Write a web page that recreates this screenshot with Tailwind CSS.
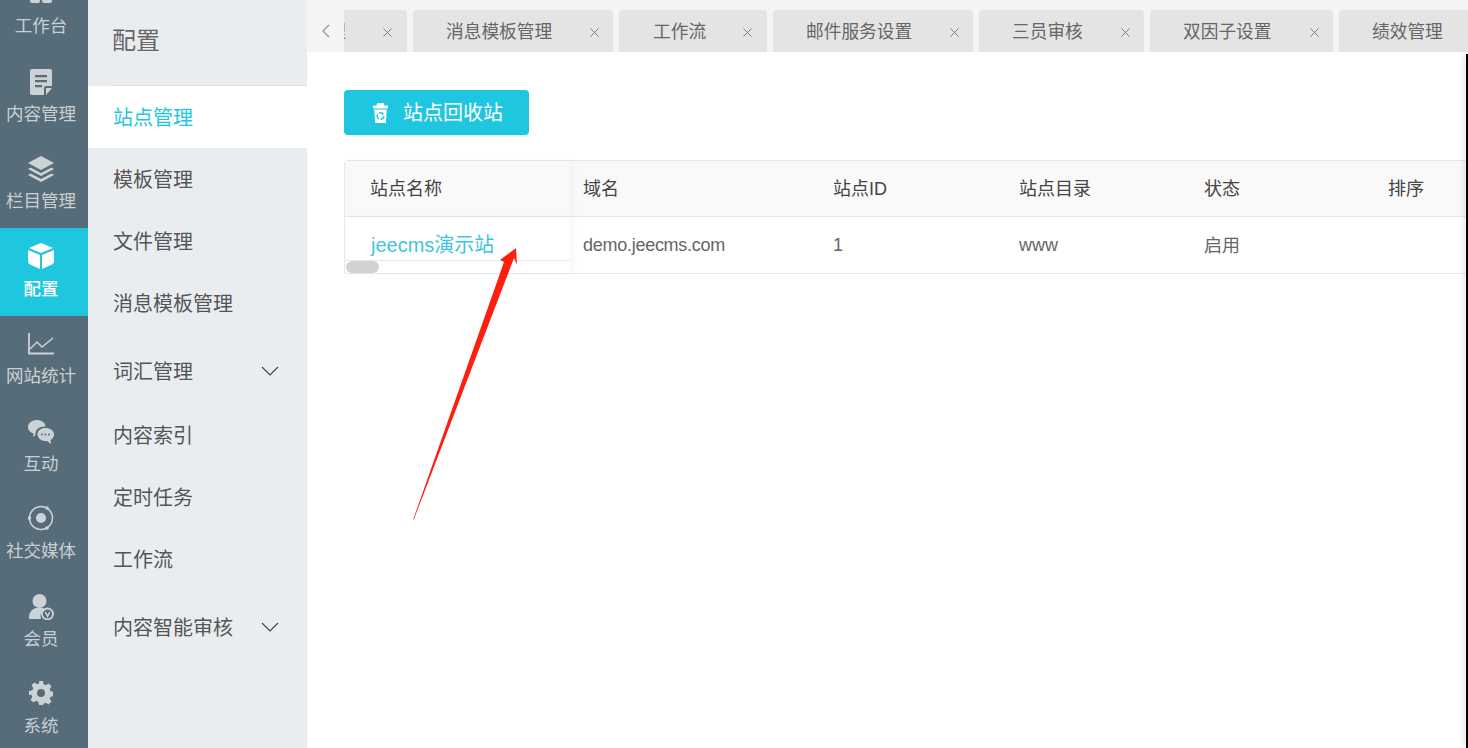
<!DOCTYPE html>
<html lang="zh-CN">
<head>
    <meta charset="UTF-8">
    <meta name="viewport" content="width=device-width, initial-scale=1.0">
    <title>配置</title>
    <script src="https://cdn.jsdelivr.net/npm/@tailwindcss/browser@4"></script>
</head>
<body class="h-[748px] w-[1468px] overflow-hidden bg-white font-['Liberation_Sans','Noto_Sans_CJK_SC',sans-serif]">
<div class="relative flex h-[748px] w-[1468px] overflow-hidden">

    <!-- icon rail -->
    <nav class="h-full w-[88px] shrink-0 overflow-hidden bg-[#566c78] text-[#c9d0d4]">
        <div class="-mt-[36px]">
            <a class="flex h-[88px] flex-col items-center justify-end pr-[6px] pb-[14px] text-[17.5px] leading-[24px]">
                <svg class="mb-[10px] h-[24px] w-[24px]" viewBox="0 0 24 24" fill="#ccd3d7"><rect x="1" y="1" width="10" height="10" rx="2"/><rect x="13" y="1" width="10" height="10" rx="2"/><rect x="1" y="13" width="10" height="10" rx="2"/><rect x="13" y="13" width="10" height="10" rx="2"/></svg>
                工作台
            </a>
            <a class="flex h-[88px] flex-col items-center justify-end pr-[6px] pb-[14px] text-[17.5px] leading-[24px]">
                <svg class="mb-[7px] h-[26px] w-[24px]" viewBox="0 0 24 26" fill="#ccd3d7"><path d="M3 0h18a2 2 0 0 1 2 2v15h-6a2 2 0 0 0-2 2v7H3a2 2 0 0 1-2-2V2a2 2 0 0 1 2-2z"/><path d="M17 19h6l-6 7z"/><path d="M6 6h12v2.200H6zM6 11h12v2.200H6zM6 16h7v2.200H6z" fill="#566c78"/></svg>
                内容管理
            </a>
            <a class="flex h-[88px] flex-col items-center justify-end pr-[6px] pb-[15px] text-[17.5px] leading-[24px]">
                <svg class="mb-[7px] h-[26px] w-[26px]" viewBox="0 0 26 26" fill="#ccd3d7"><path d="M13 0l13 7-13 7L0 7z"/><path d="M2.500 11.500L13 17l10.500-5.500L26 13 13 20 0 13z"/><path d="M2.500 17.500L13 23l10.500-5.500L26 19 13 26 0 19z"/></svg>
                栏目管理
            </a>
            <a class="flex h-[88px] flex-col items-center justify-end bg-[#1fc6e0] pr-[6px] pb-[15px] text-[17.5px] leading-[24px] font-medium text-white">
                <svg class="mb-[8px] h-[26px] w-[26px]" viewBox="0 0 26 26" fill="#fff"><path d="M13 0l12 5-12 5L1 5z"/><path d="M0 7l12 5v14L2 21.500Q0 20.500 0 18.500z"/><path d="M26 7l-12 5v14l10-4.500q2-1 2-3z"/></svg>
                配置
            </a>
            <a class="flex h-[88px] flex-col items-center justify-end pr-[6px] pb-[16px] text-[17.5px] leading-[24px]">
                <svg class="mb-[9px] h-[22px] w-[26px]" viewBox="0 0 26 22" fill="none" stroke="#ccd3d7"><path d="M1 0v20.500h25" stroke-width="1.800"/><path d="M2 16l7-7 5 5 11-9" stroke-width="1.500"/></svg>
                网站统计
            </a>
            <a class="flex h-[88px] flex-col items-center justify-end pr-[6px] pb-[16px] text-[17.5px] leading-[24px]">
                <svg class="mb-[8px] h-[24px] w-[26px]" viewBox="0 0 26 24" fill="#ccd3d7"><path d="M9 0c5 0 8.500 3 8.500 6.500C12 6 7 9 7.500 15L5 17l.5-3.500C2 12.500 0 10 0 7c0-4 4-7 9-7z"/><path d="M17.500 8c4.500 0 8.500 2.500 8.500 6.500 0 2.500-1.500 4.500-3.500 5.500l.5 4-4-3c-5 .5-9.500-2.500-9.500-6.500S13 8 17.500 8z"/><circle cx="14" cy="14.500" r="1" fill="#566c78"/><circle cx="17.500" cy="14.500" r="1" fill="#566c78"/><circle cx="21" cy="14.500" r="1" fill="#566c78"/></svg>
                互动
            </a>
            <a class="flex h-[88px] flex-col items-center justify-end pr-[6px] pb-[17px] text-[17.5px] leading-[24px]">
                <svg class="mb-[8px] h-[26px] w-[26px]" viewBox="0 0 26 26" fill="none" stroke="#ccd3d7"><circle cx="13" cy="13" r="11.500" stroke-width="1.500"/><circle cx="13" cy="13" r="5" fill="#ccd3d7" stroke="none"/><circle cx="19" cy="3" r="1.800" fill="#ccd3d7" stroke="none"/><circle cx="1.500" cy="13" r="1.800" fill="#ccd3d7" stroke="none"/><circle cx="19" cy="23" r="1.800" fill="#ccd3d7" stroke="none"/></svg>
                社交媒体
            </a>
            <a class="flex h-[88px] flex-col items-center justify-end pr-[6px] pb-[17px] text-[17.5px] leading-[24px]">
                <svg class="mb-[7px] h-[26px] w-[26px]" viewBox="0 0 26 26" fill="#ccd3d7"><circle cx="11.500" cy="7" r="7"/><path d="M1 24c0-6 3-9 7-10h7c1 .5 2 1 3 2-4 .5-6.500 4-5 8.500l-1 .5H2q-1 0-1-1z"/><circle cx="19.500" cy="20" r="5.500" fill="none" stroke="#ccd3d7" stroke-width="1.800"/><path d="M17.300 18l2.200 4.300 2.200-4.300" fill="none" stroke="#ccd3d7" stroke-width="1.500"/></svg>
                会员
            </a>
            <a class="flex h-[88px] flex-col items-center justify-end pr-[6px] pb-[18px] text-[17.5px] leading-[24px]">
                <svg class="mb-[9px] h-[24px] w-[24px]" viewBox="0 0 24 24" fill="#ccd3d7"><path fill-rule="evenodd" d="M10 0h4l.7 3.300 2.100.9 2.800-1.800 2.900 2.900-1.800 2.800.9 2.100 3.400.8v4l-3.400.7-.9 2.100 1.800 2.800-2.900 2.900-2.800-1.800-2.100.9L14 24h-4l-.7-3.300-2.100-.9-2.800 1.800-2.900-2.900 1.800-2.800-.9-2.100L0 14v-4l3.400-.8.900-2.100-1.800-2.800 2.900-2.900 2.800 1.800 2.100-.9zM12 8a4 4 0 1 0 0 8 4 4 0 0 0 0-8z"/></svg>
                系统
            </a>
        </div>
    </nav>

    <!-- second level menu -->
    <aside class="h-full w-[219px] shrink-0 bg-[#eaedf0] text-[20px] text-[#555]">
        <div class="ml-[24px] flex h-[86px] items-center border-b border-[#e1e3e6] pb-[4px] text-[24px] text-[#666]">配置</div>
        <a class="flex h-[62px] items-center bg-white pt-[2px] pl-[25px] text-[#1fc6e0]">站点管理</a>
        <a class="flex h-[62px] items-center pt-[2px] pl-[25px]">模板管理</a>
        <a class="flex h-[62px] items-center pt-[2px] pl-[25px]">文件管理</a>
        <a class="flex h-[62px] items-center pt-[2px] pl-[25px]">消息模板管理</a>
        <a class="flex h-[70px] items-center justify-between pt-[4px] pr-[28px] pl-[25px]"><span class="pt-[2px]">词汇管理</span>
            <svg class="h-[10px] w-[18px]" viewBox="0 0 18 10" fill="none" stroke="#444" stroke-width="1.200"><path d="M1 1l8 8 8-8"/></svg>
        </a>
        <a class="flex h-[62px] items-center pt-[2px] pl-[25px]">内容索引</a>
        <a class="flex h-[62px] items-center pt-[2px] pl-[25px]">定时任务</a>
        <a class="flex h-[62px] items-center pt-[2px] pl-[25px]">工作流</a>
        <a class="flex h-[74px] items-center justify-between pr-[28px] pl-[25px]"><span class="pt-[2px]">内容智能审核</span>
            <svg class="h-[10px] w-[18px]" viewBox="0 0 18 10" fill="none" stroke="#444" stroke-width="1.200"><path d="M1 1l8 8 8-8"/></svg>
        </a>
    </aside>

    <main class="min-w-0 flex-1">
        <!-- tab strip -->
        <div class="flex h-[52px] items-end overflow-hidden bg-[#f4f4f4] text-[17.7px] text-[#666]">
            <div class="flex h-[42px] w-[37px] shrink-0 items-center pb-[1px] pl-[15px]">
                <svg class="h-[14px] w-[8px]" viewBox="0 0 8 14" fill="none" stroke="#8c98a4" stroke-width="1.200"><path d="M7 1L1 7l6 6"/></svg>
            </div>
            <div class="flex h-[42px] w-[63px] shrink-0 items-center justify-between overflow-hidden rounded-tr-[4px] bg-[#e4e4e4] pt-[2px] pr-[15px]">
                <span class="-ml-[16px]">理</span>
                <svg class="h-[9px] w-[9px]" viewBox="0 0 10 10" stroke="#777"><path d="M.5.5l9 9M9.500.5l-9 9"/></svg>
            </div>
            <div class="ml-[6px] flex h-[42px] w-[200px] shrink-0 items-center rounded-t-[4px] bg-[#e4e4e4] pt-[2px] pr-[14px] pl-[33px]"><span class="flex-1">消息模板管理</span><svg class="h-[9px] w-[9px]" viewBox="0 0 10 10" stroke="#777"><path d="M.5.5l9 9M9.500.5l-9 9"/></svg></div>
            <div class="ml-[6px] flex h-[42px] w-[148px] shrink-0 items-center rounded-t-[4px] bg-[#e4e4e4] pt-[2px] pr-[15px] pl-[34px]"><span class="flex-1">工作流</span><svg class="h-[9px] w-[9px]" viewBox="0 0 10 10" stroke="#777"><path d="M.5.5l9 9M9.500.5l-9 9"/></svg></div>
            <div class="ml-[6px] flex h-[42px] w-[200px] shrink-0 items-center rounded-t-[4px] bg-[#e4e4e4] pt-[2px] pr-[14px] pl-[33px]"><span class="flex-1">邮件服务设置</span><svg class="h-[9px] w-[9px]" viewBox="0 0 10 10" stroke="#777"><path d="M.5.5l9 9M9.500.5l-9 9"/></svg></div>
            <div class="ml-[6px] flex h-[42px] w-[165px] shrink-0 items-center rounded-t-[4px] bg-[#e4e4e4] pt-[2px] pr-[14px] pl-[33px]"><span class="flex-1">三员审核</span><svg class="h-[9px] w-[9px]" viewBox="0 0 10 10" stroke="#777"><path d="M.5.5l9 9M9.500.5l-9 9"/></svg></div>
            <div class="ml-[6px] flex h-[42px] w-[183px] shrink-0 items-center rounded-t-[4px] bg-[#e4e4e4] pt-[2px] pr-[14px] pl-[33px]"><span class="flex-1">双因子设置</span><svg class="h-[9px] w-[9px]" viewBox="0 0 10 10" stroke="#777"><path d="M.5.5l9 9M9.500.5l-9 9"/></svg></div>
            <div class="ml-[6px] flex h-[42px] w-[165px] shrink-0 items-center rounded-t-[4px] bg-[#e4e4e4] pt-[2px] pl-[33px]">绩效管理</div>
        </div>

        <div class="pt-[38px] pl-[37px]">
            <button class="flex h-[45px] w-[185px] items-center rounded-[4px] bg-[#1fc6e0] pl-[29px] text-[20px] text-white">
                <svg class="mr-[15px] h-[20px] w-[15px]" viewBox="0 0 15 20"><path d="M4.500 0h6l1 2.500H15v3H0v-3h3.500z" fill="#fff"/><path d="M1.200 6.500h12.600L12.800 20H2.200z" fill="#fff"/><circle cx="7.500" cy="13" r="3.300" fill="none" stroke="#1fc6e0" stroke-width="1.500" stroke-dasharray="5 1.900"/></svg>
                站点回收站
            </button>

            <!-- sites table, runs past the right edge -->
            <div class="relative mt-[25px] h-[114px] w-[1200px] rounded-l-[4px] border border-r-0 border-[#e8e8ec] text-[18px]">
                <div class="flex h-[56px] border-b border-[#e8e8ec] bg-[#f9f9f9] text-[#444]">
                    <div class="flex w-[225px] items-center pt-[2px] pl-[25px] shadow-[4px_0_5px_rgba(0,0,0,0.03)]">站点名称</div>
                    <div class="flex w-[252px] items-center pt-[2px] pl-[13px]">域名</div>
                    <div class="flex w-[186px] items-center pt-[2px] pl-[11px]">站点ID</div>
                    <div class="flex w-[185px] items-center pt-[2px] pl-[11px]">站点目录</div>
                    <div class="flex w-[185px] items-center pt-[2px] pl-[11px]">状态</div>
                    <div class="flex w-[100px] items-center pt-[2px] pl-[10px]">排序</div>
                </div>
                <div class="flex h-[56px] text-[#666]">
                    <div class="w-[225px] shadow-[4px_0_5px_rgba(0,0,0,0.03)]">
                        <div class="flex h-[44px] items-center border-b border-[#e8e8ec] pt-[13px] pl-[26px] text-[20px] text-[#3fc5e0]">jeecms演示站</div>
                        <div class="ml-px h-[12px] w-[33px] rounded-[6px] bg-[#d2d2d2]"></div>
                    </div>
                    <div class="flex w-[252px] items-center pl-[13px] tracking-[-0.27px]">demo.jeecms.com</div>
                    <div class="flex w-[186px] items-center pl-[11px]">1</div>
                    <div class="flex w-[185px] items-center pl-[11px]">www</div>
                    <div class="flex w-[185px] items-center pt-[2px] pl-[11px]">启用</div>
                </div>
            </div>
        </div>
    </main>

    <!-- black edge of the captured window -->
    <div class="absolute top-[54px] right-0 h-[694px] w-[2px] bg-black shadow-[-2px_0_5px_rgba(0,0,0,0.2)]"></div>

    <!-- annotation drawn over the screenshot -->
    <svg class="pointer-events-none absolute top-[245px] left-[410px] h-[280px] w-[112px]" viewBox="0 0 112 280" fill="#ff1e0e"><path d="M3 275L94 17 90 15 106 3 107 20 104 13 4 274z"/></svg>
</div>
</body>
</html>
